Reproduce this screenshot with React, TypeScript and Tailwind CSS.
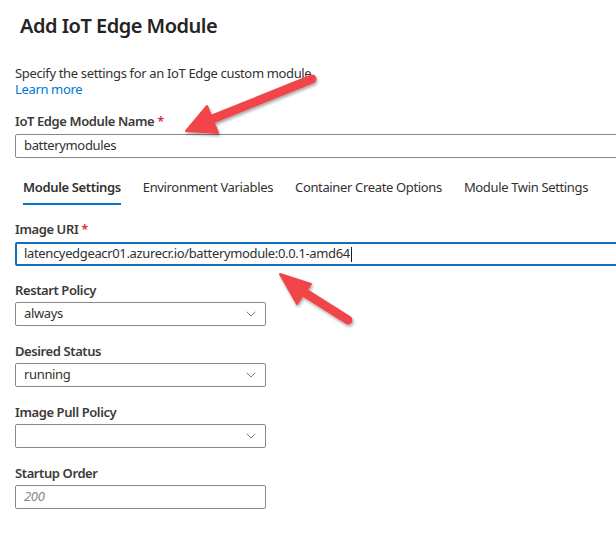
import { ChevronDown } from "lucide-react";

const font = "font-['Noto_Sans','Open_Sans',sans-serif]";

function Label({ text, required }: { text: string; required?: boolean }) {
  return (
    <div className="text-[13px] leading-[16px] font-semibold tracking-[-0.4px] text-[#3b3a39]">
      {text}
      {required && <span className="text-[#d13438]"> *</span>}
    </div>
  );
}

function Select({ value }: { value: string }) {
  return (
    <div className="mt-[4px] flex h-[24px] w-[251px] items-center justify-between rounded-[2px] border border-[#8a8886] pl-[8px] pr-[6px] text-[13px] text-[#323130]">
      <span>{value}</span>
      <ChevronDown className="h-[16px] w-[16px] text-[#605e5c]" strokeWidth={1.2} />
    </div>
  );
}

function Arrows() {
  return (
    <svg
      className="pointer-events-none absolute inset-0"
      width="616"
      height="535"
      viewBox="0 0 616 535"
    >
      <defs>
        <filter id="sh" x="-20%" y="-20%" width="140%" height="140%">
          <feDropShadow dx="1" dy="2" stdDeviation="1.5" floodColor="#000" floodOpacity="0.35" />
        </filter>
      </defs>
      <g fill="#f24548" stroke="#f24548" filter="url(#sh)">
        <line x1="312" y1="79" x2="210" y2="120" strokeWidth="9" strokeLinecap="round" />
        <polygon points="186,131 207,106 218,133" strokeWidth="2" strokeLinejoin="round" />
        <line x1="348" y1="320" x2="302" y2="291" strokeWidth="9" strokeLinecap="round" />
        <polygon points="280,274 311,284 297,304" strokeWidth="2" strokeLinejoin="round" />
      </g>
    </svg>
  );
}

export default function App() {
  return (
    <div className={`relative h-[535px] w-[616px] overflow-hidden bg-white ${font} tracking-[-0.35px] text-[#323130]`}>
      <div className="pl-[15px] pt-[12px]">
        <h1 className="ml-[5px] text-[20px] leading-[28px] font-semibold tracking-[-0.5px] text-[#252423]">
          Add IoT Edge Module
        </h1>
        <p className="mt-[25px] text-[13px] leading-[16px]">
          Specify the settings for an IoT Edge custom module
        </p>
        <a className="block text-[13px] leading-[16px] text-[#0078d4]">Learn more</a>

        <div className="mt-[16px]">
          <Label text="IoT Edge Module Name" required />
        </div>
        <div className="mt-[5px] flex h-[24px] w-[620px] items-center rounded-[2px] border border-[#8a8886] pl-[8px] text-[13px]">
          batterymodules
        </div>

        <div className="mt-[12px] ml-[8px] flex gap-[22px] whitespace-nowrap text-[13px]">
          <div className="flex h-[35px] shrink-0 flex-col justify-center border-b-2 border-[#0078d4] pt-[2px] font-semibold text-[#323130]">
            Module Settings
          </div>
          <div className="flex h-[35px] shrink-0 items-center">Environment Variables</div>
          <div className="flex h-[35px] shrink-0 items-center">Container Create Options</div>
          <div className="flex h-[35px] shrink-0 items-center">Module Twin Settings</div>
        </div>

        <div className="mt-[16px]">
          <Label text="Image URI" required />
        </div>
        <div className="mt-[5px] flex h-[24px] w-[620px] items-center rounded-[2px] border-2 border-[#106ebe] pl-[7px] text-[13px]">
          latencyedgeacr01.azurecr.io/batterymodule:0.0.1-amd64
          <span className="ml-[1px] h-[15px] w-px bg-[#201f1e]" />
        </div>

        <div className="mt-[16px]">
          <Label text="Restart Policy" />
        </div>
        <Select value="always" />

        <div className="mt-[17px]">
          <Label text="Desired Status" />
        </div>
        <Select value="running" />

        <div className="mt-[17px]">
          <Label text="Image Pull Policy" />
        </div>
        <Select value="" />

        <div className="mt-[17px]">
          <Label text="Startup Order" />
        </div>
        <div className="mt-[4px] flex h-[24px] w-[251px] items-center rounded-[2px] border border-[#8a8886] pl-[8px] text-[13px] italic text-[#8a8886]">
          200
        </div>
      </div>
      <Arrows />
    </div>
  );
}
